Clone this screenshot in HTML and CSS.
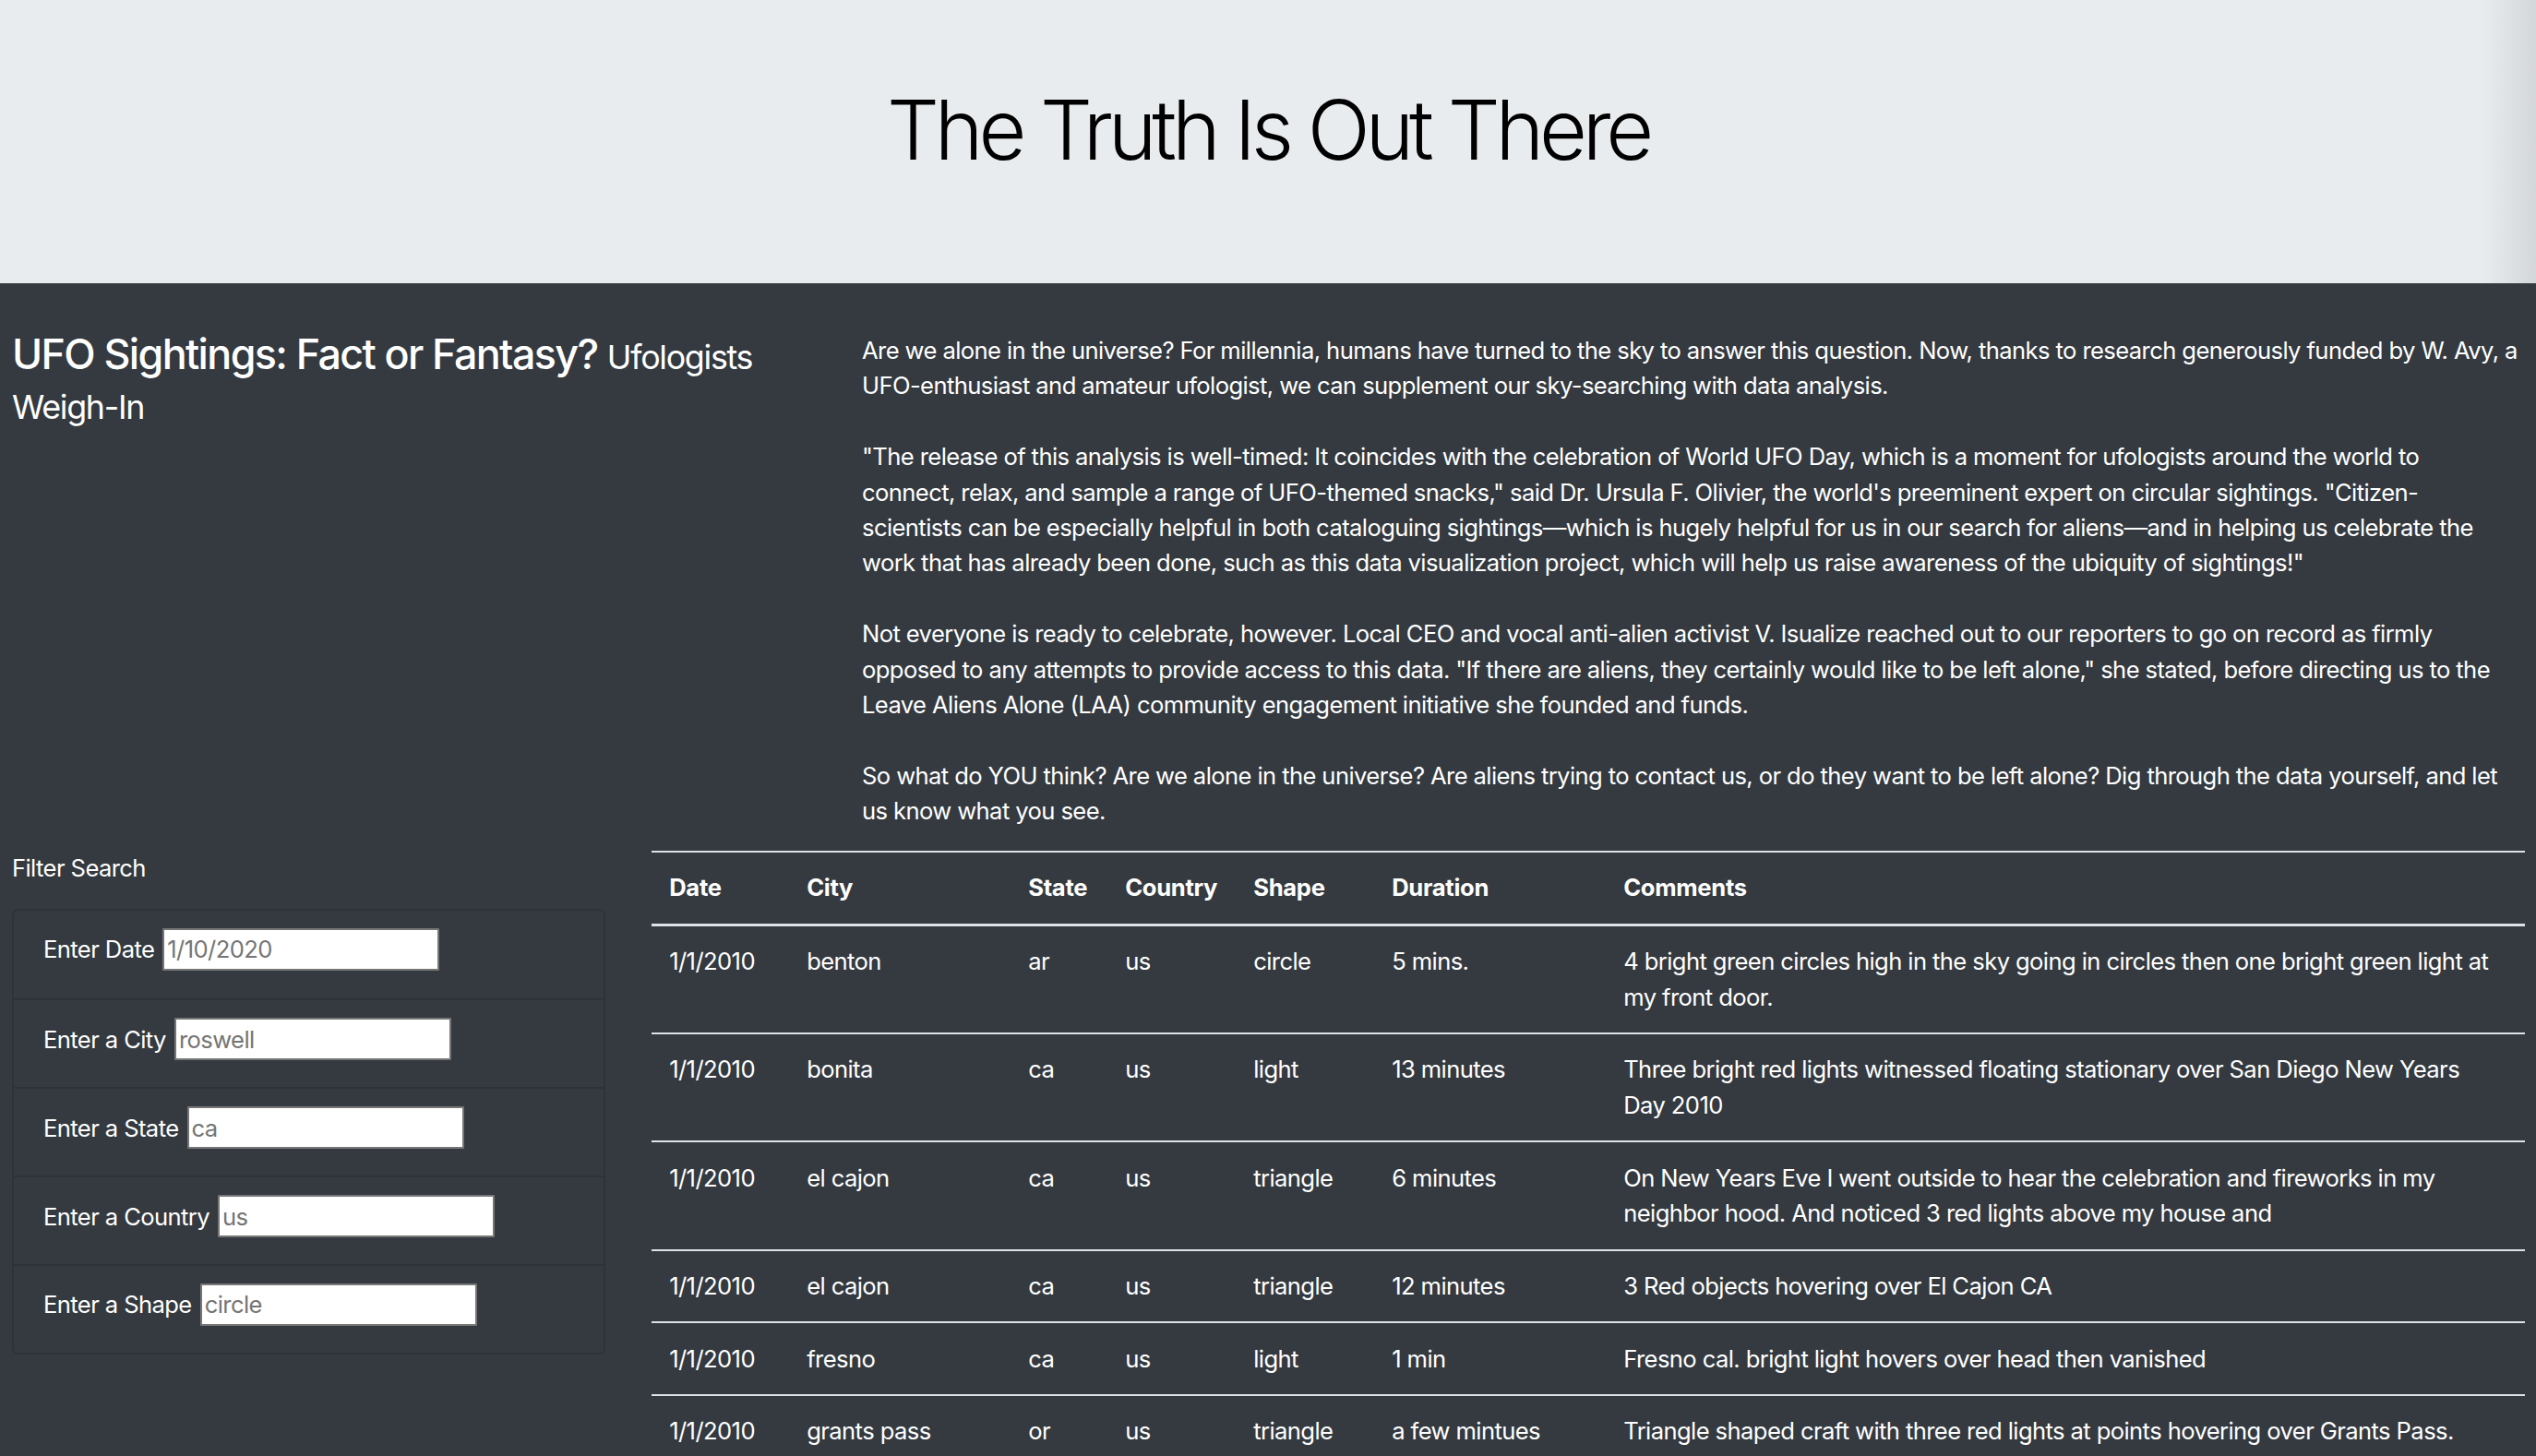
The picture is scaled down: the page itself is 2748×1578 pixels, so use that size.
FILE: index.html
```html
<!DOCTYPE html>
<html lang="en">
<head>
<meta charset="utf-8">
<title>UFO Finder</title>
<link rel="stylesheet" href="styles.css">
</head>
<body>
<header class="jumbotron">
  <h1 class="display">The Truth Is Out There</h1>
</header>
<main class="page">
  <section class="intro">
    <h3 class="intro-title">UFO Sightings: Fact or Fantasy? <small>Ufologists</small> <small>Weigh-In</small></h3>
    <p class="intro-text">Are we alone in the universe? For millennia, humans have turned to the sky to answer this question. Now, thanks to research generously funded by W. Avy, a UFO-enthusiast and amateur ufologist, we can supplement our sky-searching with data analysis.<br><br>"The release of this analysis is well-timed: It coincides with the celebration of World UFO Day, which is a moment for ufologists around the world to<br>connect, relax, and sample a range of UFO-themed snacks," said Dr. Ursula F. Olivier, the world's preeminent expert on circular sightings. "Citizen-<br>scientists can be especially helpful in both cataloguing sightings—which is hugely helpful for us in our search for aliens—and in helping us celebrate the work that has already been done, such as this data visualization project, which will help us raise awareness of the ubiquity of sightings!"<br><br>Not everyone is ready to celebrate, however. Local CEO and vocal anti-alien activist V. Isualize reached out to our reporters to go on record as firmly opposed to any attempts to provide access to this data. "If there are aliens, they certainly would like to be left alone," she stated, before directing us to the Leave Aliens Alone (LAA) community engagement initiative she founded and funds.<br><br>So what do YOU think? Are we alone in the universe? Are aliens trying to contact us, or do they want to be left alone? Dig through the data yourself, and let us know what you see.</p>
  </section>
  <section class="data">
    <aside class="filters">
      <div class="filter-title">Filter Search</div>
      <ul class="filter-list">
        <li class="filter-item"><label for="datetime">Enter Date</label><input id="datetime" type="text" placeholder="1/10/2020"></li>
        <li class="filter-item"><label for="city">Enter a City</label><input id="city" type="text" placeholder="roswell"></li>
        <li class="filter-item"><label for="state">Enter a State</label><input id="state" type="text" placeholder="ca"></li>
        <li class="filter-item"><label for="country">Enter a Country</label><input id="country" type="text" placeholder="us"></li>
        <li class="filter-item"><label for="shape">Enter a Shape</label><input id="shape" type="text" placeholder="circle"></li>
      </ul>
    </aside>
    <div class="results">
      <table class="ufo-table">
        <colgroup>
          <col class="c-date"><col class="c-city"><col class="c-state"><col class="c-country"><col class="c-shape"><col class="c-duration"><col class="c-comments">
        </colgroup>
        <thead>
          <tr><th>Date</th><th>City</th><th>State</th><th>Country</th><th>Shape</th><th>Duration</th><th>Comments</th></tr>
        </thead>
        <tbody>
          <tr><td>1/1/2010</td><td>benton</td><td>ar</td><td>us</td><td>circle</td><td>5 mins.</td><td class="comment">4 bright green circles high in the sky going in circles then one bright green light at my front door.</td></tr>
          <tr><td>1/1/2010</td><td>bonita</td><td>ca</td><td>us</td><td>light</td><td>13 minutes</td><td class="comment">Three bright red lights witnessed floating stationary over San Diego New Years Day 2010</td></tr>
          <tr><td>1/1/2010</td><td>el cajon</td><td>ca</td><td>us</td><td>triangle</td><td>6 minutes</td><td class="comment">On New Years Eve I went outside to hear the celebration and fireworks in my neighbor hood. And noticed 3 red lights above my house and</td></tr>
          <tr><td>1/1/2010</td><td>el cajon</td><td>ca</td><td>us</td><td>triangle</td><td>12 minutes</td><td class="comment">3 Red objects hovering over El Cajon CA</td></tr>
          <tr><td>1/1/2010</td><td>fresno</td><td>ca</td><td>us</td><td>light</td><td>1 min</td><td class="comment">Fresno cal. bright light hovers over head then vanished</td></tr>
          <tr><td>1/1/2010</td><td>grants pass</td><td>or</td><td>us</td><td>triangle</td><td>a few mintues</td><td class="comment">Triangle shaped craft with three red lights at points hovering over Grants Pass.</td></tr>
        </tbody>
      </table>
    </div>
  </section>
</main>
</body>
</html>
```
FILE: styles.css
```css
html, body {
  margin: 0;
  padding: 0;
}
body {
  background: #343a40;
  color: #fff;
  font-family: Inter, "Liberation Sans", sans-serif;
  font-size: 25.6px;
  line-height: 38.4px;
  letter-spacing: -0.6px;
}
.jumbotron {
  box-sizing: border-box;
  height: 307px;
  padding-top: 87px;
  text-align: center;
  background: linear-gradient(to right, rgba(0,0,0,0) 0, rgba(0,0,0,0) 2690px, rgba(0,0,0,0.09) 100%), #e9ecef;
}
.display {
  margin: 0;
  font-size: 89.6px;
  font-weight: 300;
  line-height: 1.2;
  color: #000;
  letter-spacing: -5.2px;
}
.page {
  padding: 0 12px 0 13px;
}
.intro {
  display: grid;
  grid-template-columns: 883px 1fr;
  column-gap: 38px;
  padding-top: 51px;
}
.intro-title {
  margin: 0;
  font-size: 44.8px;
  font-weight: 500;
  line-height: 1.2;
  letter-spacing: -1.6px;
}
.intro-title small {
  font-size: 80%;
  font-weight: 400;
  letter-spacing: -1.3px;
}
.intro-text {
  margin: 3px 0 23.6px;
}
.data {
  display: grid;
  grid-template-columns: 643px 1fr;
  column-gap: 50px;
  align-items: start;
}
.filter-title {
  margin: 0 0 24px;
}
.filter-list {
  list-style: none;
  margin: 0;
  padding: 0;
  border: 2px solid #2e3338;
  border-radius: 6px;
}
.filter-item {
  box-sizing: border-box;
  height: 95.8px;
  padding: 19px 32px 0;
  display: flex;
  align-items: baseline;
  gap: 9px;
}
.filter-item + .filter-item {
  border-top: 2px solid #2e3338;
}
.filter-item input {
  box-sizing: border-box;
  width: 300px;
  height: 46px;
  margin: 0;
  padding: 1px 3px;
  border: 2px solid #767676;
  border-radius: 1px;
  background: #fff;
  font-family: inherit;
  font-size: 25.6px;
  line-height: 38.4px;
  letter-spacing: -0.6px;
  color: #000;
}
.filter-item input::placeholder {
  color: #757575;
}
.ufo-table {
  width: 100%;
  table-layout: fixed;
  border-collapse: collapse;
}
.c-date { width: 149px; }
.c-city { width: 240px; }
.c-state { width: 105px; }
.c-country { width: 139px; }
.c-shape { width: 150px; }
.c-duration { width: 251px; }
.ufo-table th,
.ufo-table td {
  padding: 19.2px;
  text-align: left;
  vertical-align: top;
  border-top: 2px solid #dee2e6;
}
.ufo-table td.comment {
  padding-right: 24px;
}
.ufo-table th {
  font-weight: 700;
  letter-spacing: -0.3px;
  vertical-align: bottom;
  border-bottom: 3px solid #dee2e6;
}
```
